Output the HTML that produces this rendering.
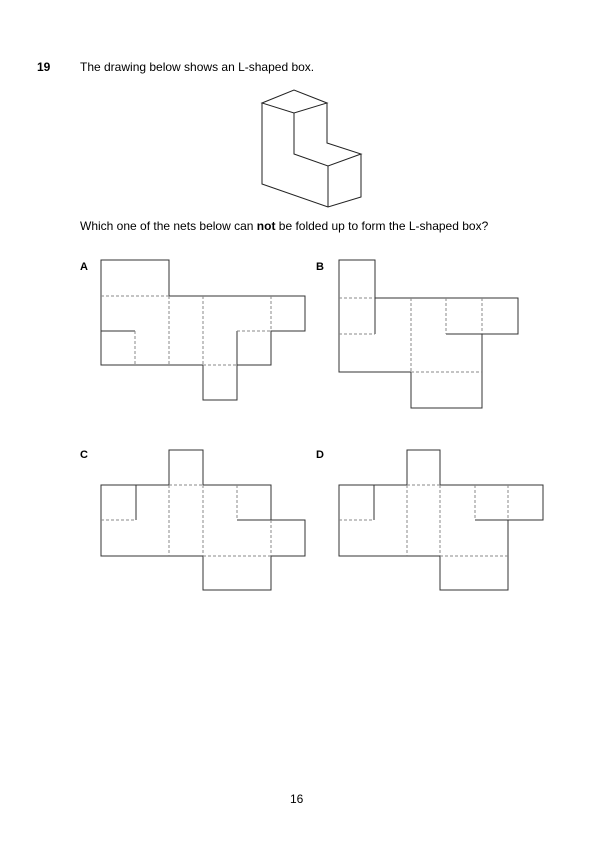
<!DOCTYPE html>
<html><head><meta charset="utf-8"><style>
html,body{margin:0;padding:0;background:#fff;}
body{width:596px;height:842px;position:relative;overflow:hidden;font-family:"Liberation Sans",Arial,sans-serif;color:#000;}
.t{position:absolute;font-size:12px;line-height:14px;white-space:nowrap;}
b{font-weight:bold;}
</style></head><body>
<div class="t" style="left:37px;top:60px;"><b>19</b></div>
<div class="t" style="left:80px;top:60px;">The drawing below shows an L-shaped box.</div>
<div class="t" style="left:80px;top:219px;">Which one of the nets below can <b>not</b> be folded up to form the L-shaped box?</div>
<div class="t" style="left:80px;top:260px;font-size:11px;"><b>A</b></div>
<div class="t" style="left:316px;top:260px;font-size:11px;"><b>B</b></div>
<div class="t" style="left:80px;top:448px;font-size:11px;"><b>C</b></div>
<div class="t" style="left:316px;top:448px;font-size:11px;"><b>D</b></div>
<div class="t" style="left:290px;top:792px;">16</div>
<svg width="596" height="842" style="position:absolute;left:0;top:0" fill="none" stroke="#333" stroke-width="1">
<g stroke="#222">
<path d="M262,103 L294,90 L327,103 L294,113 Z M262,103 L262,184 L328,207 L361,197 L361,154 M294,113 L294,154 L328,166 L361,154 L327,143 L327,103 M328,166 L328,207"/>
</g>
<!-- A -->
<path d="M101,260 H169 V296 H305 V331 H271 V365 H237 V400 H203 V365 H101 Z M101,331 H135 M237,331 V365"/>
<path stroke="#888" stroke-dasharray="3,2" d="M101,296 H169 M169,296 V365 M203,296 V365 M271,296 V331 M135,331 V365 M237,331 H271 M203,365 H237"/>
<!-- B -->
<path d="M339,260 H375 V298 H518 V334 H482 V408 H411 V372 H339 Z M446,334 H482 M375,298 V334"/>
<path stroke="#888" stroke-dasharray="3,2" d="M339,298 H375 M339,334 H375 M411,298 V372 M446,298 V334 M482,298 V334 M411,372 H482"/>
<!-- C -->
<path d="M101,485 H169 V450 H203 V485 H271 V520 H305 V556 H271 V590 H203 V556 H101 Z M136,485 V520 M237,520 H271"/>
<path stroke="#888" stroke-dasharray="3,2" d="M101,520 H136 M169,485 V556 M169,485 H203 M203,485 V556 M237,485 V520 M271,520 V556 M203,556 H271"/>
<!-- D -->
<path d="M339,485 H407 V450 H440 V485 H543 V520 H508 V590 H440 V556 H339 Z M374,485 V520 M475,520 H508"/>
<path stroke="#888" stroke-dasharray="3,2" d="M339,520 H374 M407,485 V556 M407,485 H440 M440,485 V556 M475,485 V520 M508,485 V520 M440,556 H508"/>
</svg>
</body></html>
